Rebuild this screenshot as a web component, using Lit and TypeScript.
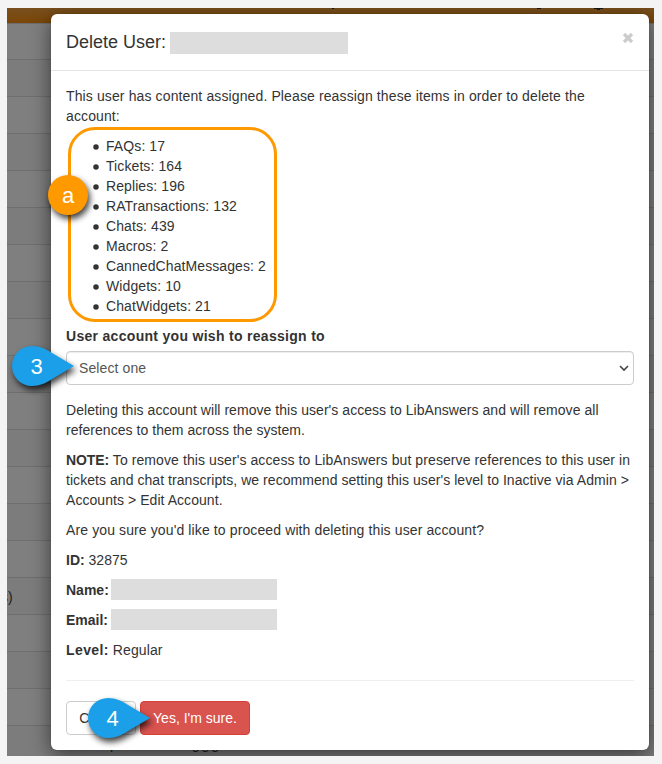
import { LitElement, html, css, svg } from "lit";
import { customElement, property } from "lit/decorators.js";

const COUNTS: [string, number][] = [
  ["FAQs", 17],
  ["Tickets", 164],
  ["Replies", 196],
  ["RATransactions", 132],
  ["Chats", 439],
  ["Macros", 2],
  ["CannedChatMessages", 2],
  ["Widgets", 10],
  ["ChatWidgets", 21],
];

/* Numbered or lettered callout laid over the dialog. */
@customElement("call-out")
export class CallOut extends LitElement {
  @property() label = "";
  @property() kind = "drop";

  static styles = css`
    :host {
      display: block;
      width: 64px;
      height: 42px;
      pointer-events: none;
    }
    svg {
      display: block;
      overflow: visible;
    }
    text {
      font-family: "Liberation Sans", Arial, sans-serif;
      font-size: 22px;
      fill: #fff;
      text-anchor: middle;
    }
    .drop,
    .disc {
      filter: drop-shadow(2px 4px 3px rgba(0, 0, 0, 0.75));
    }
    .drop {
      fill: #1a9fe8;
    }
    .disc {
      fill: #ff9900;
    }
  `;

  render() {
    const shape =
      this.kind === "drop"
        ? svg`<path class="drop" d="M20 0C28 0 34 3 40 7L62 20L40 33C34 37 28 40 20 40A20 20 0 0 1 20 0Z"/>`
        : svg`<circle class="disc" cx="20" cy="20" r="20"/>`;
    return html`<svg width="64" height="42" viewBox="0 0 64 42">
      ${shape}
      <text x=${this.kind === "drop" ? 24.5 : 20} y="28">${this.label}</text>
    </svg>`;
  }
}

@customElement("app-root")
export class AppRoot extends LitElement {
  static styles = css`
    :host {
      display: block;
      box-sizing: border-box;
      width: 662px;
      height: 764px;
      padding: 8px 8px 8px 7px;
      background: #f4f4f4;
      color: #333;
      font: 14px/20px "Liberation Sans", Arial, sans-serif;
    }
    * {
      box-sizing: border-box;
    }
    .page {
      position: relative;
      width: 647px;
      height: 748px;
      overflow: hidden;
      background: #7c7c7c;
    }
    .bar {
      height: 15px;
      background: linear-gradient(#79501e, #7a4607);
    }
    .row {
      height: 37px;
      border-top: 1px solid #6e6e6e;
      background: #7f7f7f;
    }
    .row:nth-child(odd) {
      background: #7c7c7c;
    }
    .row.first {
      height: 36px;
    }
    .row.named {
      padding-top: 9px;
      color: #1c1c1c;
    }
    .named span {
      display: block;
      margin-left: -6px;
    }
    .row.last {
      padding: 8px 0 0 103px;
      color: #1c1c1c;
      display: flex;
      gap: 74px;
    }
    .last span + span {
      letter-spacing: 2px;
    }
    .modal {
      position: absolute;
      left: 44px;
      top: 6px;
      width: 598px;
      height: 736px;
      border-radius: 6px;
      background: #fff;
      box-shadow: 0 5px 20px rgba(0, 0, 0, 0.55), 0 0 1px rgba(0, 0, 0, 0.4);
    }
    .header {
      height: 57px;
      padding: 15px;
      border-bottom: 1px solid #e5e5e5;
      display: flex;
      align-items: flex-start;
    }
    h4 {
      margin: 0;
      font-size: 18px;
      font-weight: 400;
      line-height: 26px;
    }
    .mask {
      background: #ddd;
      width: 166px;
      height: 21px;
    }
    .header .mask {
      width: 178px;
      height: 22px;
      margin: 3px 0 0 4px;
    }
    .close {
      margin: 3px 0 0 auto;
      padding: 0;
      border: 0;
      background: none;
      width: 13px;
      height: 20px;
    }
    .close svg {
      display: block;
    }
    .body {
      padding: 15px;
    }
    p {
      margin: 0 0 10px;
      white-space: nowrap;
    }
    .intro {
      letter-spacing: 0.12px;
    }
    .outcome {
      letter-spacing: 0.045px;
    }
    .note {
      letter-spacing: 0.055px;
    }
    .note .lead {
      letter-spacing: 0.09px;
    }
    .note b {
      letter-spacing: -0.1px;
    }
    .confirm {
      letter-spacing: 0.115px;
    }
    .level {
      letter-spacing: 0.1px;
    }
    .level b {
      letter-spacing: 0.4px;
    }
    ul {
      margin: 0 0 10px;
      padding-left: 27px;
      list-style: none;
      letter-spacing: 0.09px;
    }
    li {
      display: flex;
      align-items: center;
      gap: 7px;
    }
    li::before {
      content: "";
      width: 6px;
      height: 6px;
      border-radius: 50%;
      background: #333;
      transform: translateY(1px) scale(0.92);
    }
    label {
      display: block;
      font-weight: 700;
      margin-bottom: 5px;
      letter-spacing: 0.3px;
    }
    .select {
      height: 34px;
      border: 1px solid #ccc;
      border-radius: 4px;
      box-shadow: inset 0 1px 1px rgba(0, 0, 0, 0.075);
      color: #555;
      padding: 0 4px 0 12px;
      margin-bottom: 15px;
      display: flex;
      align-items: center;
      justify-content: space-between;
      letter-spacing: 0.1px;
    }
    .field {
      display: flex;
      height: 20px;
    }
    .field b {
      width: 45px;
      white-space: nowrap;
    }
    .field .mask {
      margin-top: -1px;
    }
    hr {
      margin: 20px 0;
      border: 0;
      border-top: 1px solid #eee;
    }
    .actions {
      display: flex;
      gap: 4px;
    }
    .btn {
      height: 34px;
      width: 70px;
      padding: 6px 12px;
      border: 1px solid #ccc;
      border-radius: 4px;
      background: #fff;
      color: #333;
      font: inherit;
      white-space: nowrap;
    }
    .danger {
      width: 110px;
      background: #d9534f;
      border-color: #d43f3a;
      color: #fff;
    }
    .ring {
      position: absolute;
      left: 61px;
      top: 119px;
      width: 209px;
      height: 195px;
      border: 3px solid #ff9900;
      border-radius: 27px;
    }
    call-out {
      position: absolute;
    }
    .a {
      left: 41px;
      top: 167px;
    }
    .three {
      left: 5px;
      top: 338px;
    }
    .four {
      left: 81px;
      top: 690px;
    }
    .specks {
      position: absolute;
      left: 0;
      top: 0;
    }
  `;

  private row(i: number) {
    if (i === 0) return html`<div class="row first"></div>`;
    if (i === 15) return html`<div class="row named"><span>s)</span></div>`;
    if (i === 19)
      return html`<div class="row last"><span>p</span><span>ggg</span></div>`;
    return html`<div class="row"></div>`;
  }

  render() {
    return html`
      <div class="page">
        <div class="bar"></div>
        ${Array.from({ length: 20 }, (_, i) => this.row(i))}
        <svg class="specks" width="647" height="4" fill="#15181c">
          <rect x="325" y="0" width="2" height="1" />
          <rect x="530" y="0" width="4" height="1" />
          <path d="M587 0h9v1h-3v1h-3v-1h-3z" />
        </svg>
        <div class="modal">
          <div class="header">
            <h4>Delete User:</h4>
            <div class="mask"></div>
            <button class="close" aria-label="Close">
              <svg width="13" height="20" viewBox="0 0 13 20">
                <path d="M3 2L11 10M11 2L3 10" stroke="#ccc" stroke-width="3.200" />
              </svg>
            </button>
          </div>
          <div class="body">
            <p class="intro">
              This user has content assigned. Please reassign these items in order to delete the<br />account:
            </p>
            <ul>
              ${COUNTS.map(([name, n]) => html`<li>${name}: ${n}</li>`)}
            </ul>
            <label>User account you wish to reassign to</label>
            <div class="select">
              <span>Select one</span>
              <svg width="10" height="8" viewBox="0 0 10 8" fill="none">
                <path d="M1 2L5 6L9 2" stroke="#444" stroke-width="1.600" />
              </svg>
            </div>
            <p class="outcome">
              Deleting this account will remove this user's access to LibAnswers and will remove all<br />references
              to them across the system.
            </p>
            <p class="note">
              <span class="lead"
                ><b>NOTE:</b> To remove this user's access to LibAnswers but preserve references to this user in</span
              ><br />tickets and chat transcripts, we recommend setting this user's level to Inactive via Admin
              &gt;<br />Accounts &gt; Edit Account.
            </p>
            <p class="confirm">Are you sure you'd like to proceed with deleting this user account?</p>
            <p><b>ID:</b> 32875</p>
            <p class="field"><b>Name:</b><span class="mask"></span></p>
            <p class="field"><b>Email:</b><span class="mask"></span></p>
            <p class="level"><b>Level:</b> Regular</p>
            <hr />
            <div class="actions">
              <button class="btn">Cancel</button>
              <button class="btn danger">Yes, I'm sure.</button>
            </div>
          </div>
        </div>
        <div class="ring"></div>
        <call-out class="a" kind="disc" label="a"></call-out>
        <call-out class="three" label="3"></call-out>
        <call-out class="four" label="4"></call-out>
      </div>
    `;
  }
}
